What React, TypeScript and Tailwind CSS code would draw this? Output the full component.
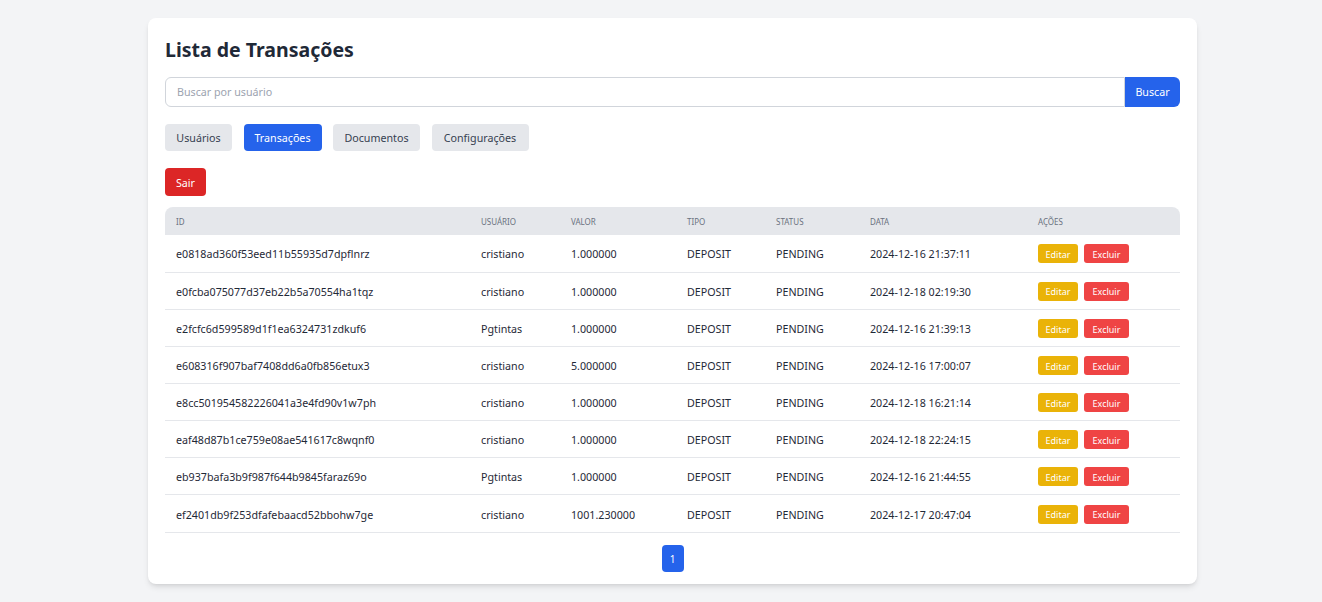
const transactions = [
  { id: "e0818ad360f53eed11b55935d7dpflnrz", user: "cristiano", value: "1.000000", date: "2024-12-16 21:37:11" },
  { id: "e0fcba075077d37eb22b5a70554ha1tqz", user: "cristiano", value: "1.000000", date: "2024-12-18 02:19:30" },
  { id: "e2fcfc6d599589d1f1ea6324731zdkuf6", user: "Pgtintas", value: "1.000000", date: "2024-12-16 21:39:13" },
  { id: "e608316f907baf7408dd6a0fb856etux3", user: "cristiano", value: "5.000000", date: "2024-12-16 17:00:07" },
  { id: "e8cc501954582226041a3e4fd90v1w7ph", user: "cristiano", value: "1.000000", date: "2024-12-18 16:21:14" },
  { id: "eaf48d87b1ce759e08ae541617c8wqnf0", user: "cristiano", value: "1.000000", date: "2024-12-18 22:24:15" },
  { id: "eb937bafa3b9f987f644b9845faraz69o", user: "Pgtintas", value: "1.000000", date: "2024-12-16 21:44:55" },
  { id: "ef2401db9f253dfafebaacd52bbohw7ge", user: "cristiano", value: "1001.230000", date: "2024-12-17 20:47:04" },
];

const tabs = [
  { label: "Usuários", width: "w-[67px]" },
  { label: "Transações", width: "w-[78px]" },
  { label: "Documentos", width: "w-[87px]" },
  { label: "Configurações", width: "w-[97px]" },
];
const headers = ["ID", "Usuário", "Valor", "Tipo", "Status", "Data", "Ações"];

export default function App() {
  return (
    <div className="min-h-[602px] bg-[#f3f4f6] pt-[18px] font-['Noto_Sans',sans-serif]">
      <div className="ml-[148px] h-[566px] w-[1049px] rounded-lg bg-white px-[17px] pt-[17px] shadow-md">
        <h1 className="mb-[12px] text-[19.5px] leading-[30px] font-bold text-[#1f2937]">Lista de Transações</h1>

        <div className="flex h-[30px]">
          <input
            placeholder="Buscar por usuário"
            className="min-w-0 flex-1 rounded-l-md border border-[#d1d5db] px-[11px] text-[10.7px] text-[#374151] placeholder:text-[#9ca3af]"
          />
          <button className="w-[55px] rounded-r-md bg-[#2563eb] text-[10.7px] text-white">Buscar</button>
        </div>

        <div className="mt-[17px] flex gap-[11.5px]">
          {tabs.map((tab) => (
            <button
              key={tab.label}
              className={`h-[27px] rounded pt-[2px] text-[10.7px] ${tab.width} ${
                tab.label === "Transações" ? "bg-[#2563eb] text-white" : "bg-[#e5e7eb] text-[#374151]"
              }`}
            >
              {tab.label}
            </button>
          ))}
        </div>

        <button className="mt-[17px] block h-[28px] w-[41px] rounded bg-[#dc2626] pt-[2px] text-[10.7px] text-white">Sair</button>

        <table className="mt-[11px] w-[1015px] table-fixed border-collapse text-[10.7px] text-[#1f2937]">
          <colgroup>
            <col className="w-[305px]" />
            <col className="w-[90px]" />
            <col className="w-[116px]" />
            <col className="w-[89px]" />
            <col className="w-[94px]" />
            <col className="w-[168px]" />
            <col />
          </colgroup>
          <thead>
            <tr className="h-[28px] bg-[#e5e7eb]">
              {headers.map((header, i) => (
                <th
                  key={header}
                  className={`px-[11px] pt-[2px] text-left text-[8px] font-normal text-[#6b7280] uppercase ${
                    i === 0 ? "rounded-tl-lg" : ""
                  } ${i === headers.length - 1 ? "rounded-tr-lg" : ""}`}
                >
                  {header}
                </th>
              ))}
            </tr>
          </thead>
          <tbody>
            {transactions.map((t) => (
              <tr key={t.id} className="h-[37.15px] border-b border-[#e5e7eb]">
                <td className="px-[11px] pt-[2px]">{t.id}</td>
                <td className="px-[11px] pt-[2px]">{t.user}</td>
                <td className="px-[11px] pt-[2px]">{t.value}</td>
                <td className="px-[11px] pt-[2px]">DEPOSIT</td>
                <td className="px-[11px] pt-[2px]">PENDING</td>
                <td className="px-[11px] pt-[2px]">{t.date}</td>
                <td className="px-[11px] pt-[1px]">
                  <div className="flex gap-[6px]">
                    <button className="h-[19px] w-[40px] rounded-[3px] bg-[#eab308] pt-[2px] text-[9px] text-white">Editar</button>
                    <button className="h-[19px] w-[45px] rounded-[3px] bg-[#ef4444] pt-[2px] text-[9px] text-white">Excluir</button>
                  </div>
                </td>
              </tr>
            ))}
          </tbody>
        </table>

        <div className="mt-[12px] flex justify-center">
          <button className="h-[27px] w-[22px] rounded bg-[#2563eb] pt-[2px] text-[10px] text-white">1</button>
        </div>
      </div>
    </div>
  );
}
